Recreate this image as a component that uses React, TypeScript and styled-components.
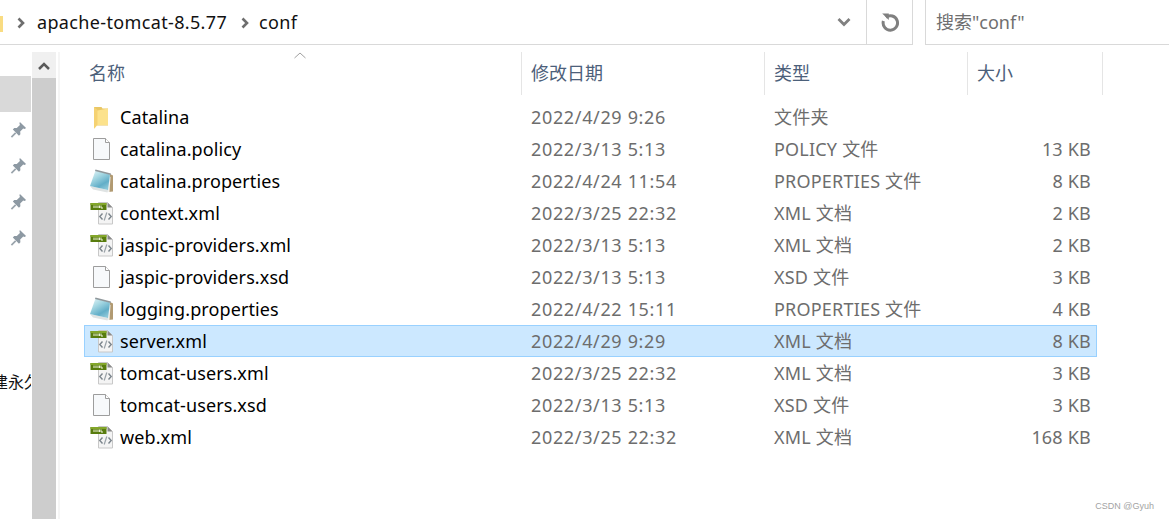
import React from "react";
import styled, { createGlobalStyle } from "styled-components";

const FONT = `"Noto Sans", "Noto Sans CJK SC", sans-serif`;

const Global = createGlobalStyle`
  html, body { margin: 0; padding: 0; background: #fff; height: 100%; overflow: hidden; }
  #root { height: 100%; }
`;
const Page = styled.div`
  position: relative;
  width: 1169px;
  height: 519px;
  display: flex;
  flex-direction: column;
  overflow: hidden;
  background: #fff;
  font-family: ${FONT};
  font-size: 18px;
`;
const AddressRow = styled.div`
  display: flex;
  height: 45px;
  flex: none;
`;
const Breadcrumb = styled.div`
  width: 913px;
  box-sizing: border-box;
  display: flex;
  align-items: center;
  border-bottom: 1px solid #d9d9d9;
  border-right: 1px solid #d9d9d9;
  color: #111;
`;
const FolderStub = styled.div`
  width: 3px;
  height: 16px;
  margin-top: 3px;
  background: #f9dc82;
`;
const Crumb = styled.span`
  line-height: 43px;
  white-space: nowrap;
  letter-spacing: 0.35px;
`;
const CrumbArrow = styled.svg<{ $r?: number }>`
  width: 8px;
  height: 12px;
  flex: none;
  margin: 2px ${(p) => p.$r ?? 12}px 0 14px;
`;
const Spacer = styled.div`
  flex: 1;
`;
const Dropdown = styled.div`
  width: 44px;
  height: 44px;
  display: flex;
  align-items: center;
  justify-content: center;
  border-right: 1px solid #d9d9d9;
`;
const Refresh = styled.div`
  width: 45px;
  height: 44px;
  display: flex;
  align-items: center;
  justify-content: center;
`;
const Search = styled.div`
  margin-left: 12px;
  flex: 1;
  border-left: 1px solid #d9d9d9;
  border-bottom: 1px solid #d9d9d9;
  padding-left: 10px;
  line-height: 44px;
  color: #6f6f6f;
`;
const Body = styled.div`
  flex: 1;
  display: flex;
  padding-top: 7px;
  min-height: 0;
`;
const Nav = styled.div`
  width: 31px;
  margin-right: 1px;
  padding-top: 24px;
  flex: none;
  overflow: hidden;
  display: flex;
  flex-direction: column;
`;
const NavSelected = styled.div`
  height: 36px;
  background: #d9d9d9;
  flex: none;
`;
const NavPin = styled.div`
  height: 36px;
  box-sizing: border-box;
  padding: 0 4px 2px 0;
  flex: none;
  display: flex;
  align-items: center;
  justify-content: flex-end;
`;
const NavText = styled.div`
  margin: 108px 0 0 -8px;
  height: 36px;
  line-height: 36px;
  width: 80px;
  font-size: 16px;
  color: #111;
  white-space: nowrap;
  flex: none;
`;
const ScrollBar = styled.div`
  width: 24px;
  flex: none;
  background: #cdcdcd;
`;
const ScrollUp = styled.div`
  height: 26px;
  box-sizing: border-box;
  padding-top: 2px;
  background: #f0f0f0;
  display: flex;
  align-items: center;
  justify-content: center;
`;
const Main = styled.div`
  flex: 1;
  margin-left: 2px;
  border-left: 2px solid #f5f5f5;
  min-width: 0;
`;
const Header = styled.div`
  display: grid;
  grid-template-columns: 442px 243px 203px 135px;
  height: 40px;
  margin-left: 20px;
  margin-bottom: 9px;
`;
const HeaderCell = styled.div`
  position: relative;
  box-sizing: border-box;
  border-right: 1px solid #e5e5e5;
  padding-left: 9px;
  line-height: 43px;
  color: #4c607a;
`;
const SortCaret = styled.svg`
  position: absolute;
  left: 214px;
  top: 0;
  width: 12px;
  height: 7px;
`;
const Row = styled.div<{ $selected?: boolean }>`
  display: grid;
  grid-template-columns: 437px 243px 203px 130px;
  height: 32px;
  margin-left: 24px;
  width: 1013px;
  box-sizing: border-box;
  align-items: center;
  line-height: 30px;
  outline: ${(p) => (p.$selected ? "1px solid #99d1ff" : "none")};
  outline-offset: -1px;
  background: ${(p) => (p.$selected ? "#cce8ff" : "transparent")};
`;
const NameCell = styled.div`
  display: flex;
  align-items: center;
  gap: 7px;
  padding-left: 5px;
  color: #000;
  white-space: nowrap;
  letter-spacing: 0.1px;
`;
const DateCell = styled.div`
  padding-left: 10px;
  color: #6d6d6d;
  white-space: nowrap;
  letter-spacing: 0.65px;
`;
const TypeCell = styled.div`
  padding-left: 10px;
  color: #6d6d6d;
  white-space: nowrap;
  letter-spacing: 0.2px;
`;
const SizeCell = styled.div`
  padding-right: 6px;
  text-align: right;
  color: #6d6d6d;
  white-space: nowrap;
  letter-spacing: 0.2px;
`;
const IconBox = styled.svg`
  width: 24px;
  height: 24px;
  flex: none;
`;
const Watermark = styled.div`
  position: absolute;
  right: 15px;
  bottom: 7px;
  font-family: "Liberation Sans", sans-serif;
  font-size: 9px;
  line-height: 12px;
  color: #a3a3a3;
`;

const FolderIcon = () => (
  <IconBox viewBox="0 0 24 24">
    <path d="M5 2h7.500l1 1.500H19v17H8z" fill="#e9c766" />
    <path d="M8.500 5.500 19 3.500V20H8.500l-3 3.500H5V7z" fill="#fce28c" />
    <path d="M5 2v21.500l3.500-4V5z" fill="#f5d272" />
  </IconBox>
);
const PageIcon = () => (
  <IconBox viewBox="0 0 24 24">
    <path d="M4.500 1.500h12l4 4v17h-16z" fill="#f7f9fb" stroke="#9d9d9d" />
    <path d="M16.500 1.500v4h4" fill="#fff" stroke="#9d9d9d" />
  </IconBox>
);
const NoteIcon = () => (
  <IconBox viewBox="0 0 24 24">
    <defs>
      <linearGradient id="noteFill" x1="0.1" y1="0" x2="0.7" y2="1">
        <stop offset="0" stopColor="#e2f3f6" />
        <stop offset="0.35" stopColor="#a6d8e3" />
        <stop offset="0.75" stopColor="#62aec8" />
        <stop offset="1" stopColor="#8cc7d8" />
      </linearGradient>
    </defs>
    <path d="M21 5 24 6.500V22.500L19 23z" fill="#b19a72" />
    <path d="M19.500 7 21.500 8 20.500 23 18 23z" fill="#f1f1ee" />
    <path d="M1 17 19 21 18.500 23.500 4 20.500z" fill="#dfe3e3" />
    <path d="M6.500 1.500 21 5.500 19 21 1 17z" fill="url(#noteFill)" />
    <path d="M6.500 .5 22 4.500 21.500 6 6 2z" fill="#8f979b" />
  </IconBox>
);
const XmlIcon = () => (
  <IconBox viewBox="0 0 24 24">
    <path d="M9.500 1.500h9l5 5v16.500h-14z" fill="#f4f4f4" stroke="#c8c8c8" />
    <path d="M18.500 1.500v5h5z" fill="#8a8a8a" />
    <rect x="1.500" y="2" width="16" height="7" fill="#587c0e" />
    <rect x="1.500" y="2" width="16" height="2" fill="#83a62a" />
    <path d="M5 4.500v2.500M7 4.500v2.500M9 4.500v2.500M10.500 4.500v2.500M12 4.500v2.500h2" stroke="#eef3dc" strokeWidth="1" fill="none" />
    <path d="M13.500 12.500 10.800 15.500 13.500 18.500M19.500 12.500l2.700 3-2.700 3" stroke="#7b858c" strokeWidth="1.400" fill="none" />
    <path d="M17.800 11.500 15.200 19.500" stroke="#9aa2a8" strokeWidth="1.200" fill="none" />
  </IconBox>
);
const PinIcon = () => (
  <svg width="17" height="17" viewBox="0 0 18 18">
    <path d="M10.500 1 17 7.500 15.500 8.500 14 8 10.800 11.200 11 14 9.500 15.500 3 9 4.500 7.500 7.200 7.500 10.500 4.200 10 2.500z" fill="#8d99a3" />
    <path d="M6 12.500 1.500 17" stroke="#9aa4ac" strokeWidth="1.800" />
  </svg>
);

type Kind = "folder" | "page" | "note" | "xml";
const icons: Record<Kind, React.FC> = { folder: FolderIcon, page: PageIcon, note: NoteIcon, xml: XmlIcon };

const files: { name: string; date: string; type: string; size: string; kind: Kind; selected?: boolean }[] = [
  { name: "Catalina", date: "2022/4/29 9:26", type: "文件夹", size: "", kind: "folder" },
  { name: "catalina.policy", date: "2022/3/13 5:13", type: "POLICY 文件", size: "13 KB", kind: "page" },
  { name: "catalina.properties", date: "2022/4/24 11:54", type: "PROPERTIES 文件", size: "8 KB", kind: "note" },
  { name: "context.xml", date: "2022/3/25 22:32", type: "XML 文档", size: "2 KB", kind: "xml" },
  { name: "jaspic-providers.xml", date: "2022/3/13 5:13", type: "XML 文档", size: "2 KB", kind: "xml" },
  { name: "jaspic-providers.xsd", date: "2022/3/13 5:13", type: "XSD 文件", size: "3 KB", kind: "page" },
  { name: "logging.properties", date: "2022/4/22 15:11", type: "PROPERTIES 文件", size: "4 KB", kind: "note" },
  { name: "server.xml", date: "2022/4/29 9:29", type: "XML 文档", size: "8 KB", kind: "xml", selected: true },
  { name: "tomcat-users.xml", date: "2022/3/25 22:32", type: "XML 文档", size: "3 KB", kind: "xml" },
  { name: "tomcat-users.xsd", date: "2022/3/13 5:13", type: "XSD 文件", size: "3 KB", kind: "page" },
  { name: "web.xml", date: "2022/3/25 22:32", type: "XML 文档", size: "168 KB", kind: "xml" },
];

const Arrow = ({ r }: { r?: number }) => (
  <CrumbArrow $r={r} viewBox="0 0 8 12">
    <path d="M1.500 1.500 6 6l-4.500 4.500" fill="none" stroke="#6e6e6e" strokeWidth="2.600" />
  </CrumbArrow>
);

export default function App() {
  return (
    <Page>
      <Global />
      <AddressRow>
        <Breadcrumb>
          <FolderStub />
          <Arrow />
          <Crumb>apache-tomcat-8.5.77</Crumb>
          <Arrow r={10} />
          <Crumb>conf</Crumb>
          <Spacer />
          <Dropdown>
            <svg width="14" height="10" viewBox="0 0 14 10">
              <path d="M1.500 2 7 7.500 12.500 2" fill="none" stroke="#808080" strokeWidth="2.800" />
            </svg>
          </Dropdown>
          <Refresh>
            <svg width="18" height="20" viewBox="0 0 18 20">
              <path d="M5 5.200A7.200 7.200 0 1 1 2.400 9" fill="none" stroke="#808080" strokeWidth="3" />
              <path d="M1.200 1.500h6.600v6.600z" fill="#808080" />
            </svg>
          </Refresh>
        </Breadcrumb>
        <Search>搜索"conf"</Search>
      </AddressRow>
      <Body>
        <Nav>
          <NavSelected />
          <NavPin><PinIcon /></NavPin>
          <NavPin><PinIcon /></NavPin>
          <NavPin><PinIcon /></NavPin>
          <NavPin><PinIcon /></NavPin>
          <NavText>建永久</NavText>
        </Nav>
        <ScrollBar>
          <ScrollUp>
            <svg width="12" height="8" viewBox="0 0 12 8">
              <path d="M1 7 6 2l5 5" fill="none" stroke="#5a5a5a" strokeWidth="2.500" />
            </svg>
          </ScrollUp>
        </ScrollBar>
        <Main>
          <Header>
            <HeaderCell>
              名称
              <SortCaret viewBox="0 0 12 7">
                <path d="M.5 6 6 1l5.500 5" fill="none" stroke="#a0a0a0" />
              </SortCaret>
            </HeaderCell>
            <HeaderCell>修改日期</HeaderCell>
            <HeaderCell>类型</HeaderCell>
            <HeaderCell>大小</HeaderCell>
          </Header>
          {files.map((f) => {
            const Icon = icons[f.kind];
            return (
              <Row key={f.name} $selected={f.selected}>
                <NameCell>
                  <Icon />
                  {f.name}
                </NameCell>
                <DateCell>{f.date}</DateCell>
                <TypeCell>{f.type}</TypeCell>
                <SizeCell>{f.size}</SizeCell>
              </Row>
            );
          })}
        </Main>
      </Body>
      <Watermark>CSDN @Gyuh</Watermark>
    </Page>
  );
}
